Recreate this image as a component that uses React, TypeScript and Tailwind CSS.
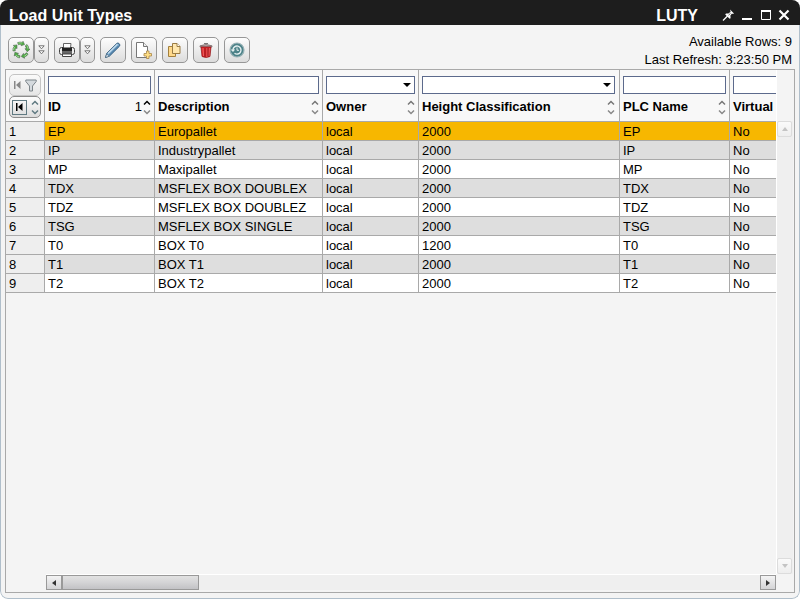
import React, { useState } from "react";

type Filter = "text" | "select";

interface Column {
  title: string;
  filter: Filter;
  width: string;
  sort?: number;
}

const columns: Column[] = [
  { title: "ID", filter: "text", width: "w-[110px]", sort: 1 },
  { title: "Description", filter: "text", width: "w-[168px]" },
  { title: "Owner", filter: "select", width: "w-[96px]" },
  { title: "Height Classification", filter: "select", width: "w-[201px]" },
  { title: "PLC Name", filter: "text", width: "w-[110px]" },
  { title: "Virtual", filter: "text", width: "w-[110px]" },
];

const rows: string[][] = [
  ["EP", "Europallet", "local", "2000", "EP", "No"],
  ["IP", "Industrypallet", "local", "2000", "IP", "No"],
  ["MP", "Maxipallet", "local", "2000", "MP", "No"],
  ["TDX", "MSFLEX BOX DOUBLEX", "local", "2000", "TDX", "No"],
  ["TDZ", "MSFLEX BOX DOUBLEZ", "local", "2000", "TDZ", "No"],
  ["TSG", "MSFLEX BOX SINGLE", "local", "2000", "TSG", "No"],
  ["T0", "BOX T0", "local", "1200", "T0", "No"],
  ["T1", "BOX T1", "local", "2000", "T1", "No"],
  ["T2", "BOX T2", "local", "2000", "T2", "No"],
];

const RecycleIcon = () => (
  <svg width="20" height="20" viewBox="0 0 20 20" aria-hidden="true" className="shrink-0">
    {[0, 72, 144, 216, 288].map((a) => (
      <g key={a} transform={`rotate(${a} 10 10)`}>
        <path d="M6.6 2.6Q9 1.4 11.4 2.4L12 1.2L13.6 4.6L10 5.8L10.5 4.6Q8.6 4 7.4 4.8Z" fill="#4fae45" stroke="#4b5f4c" strokeWidth=".5" />
        <path d="M7.4 3.2Q9 2.4 10.8 3" stroke="#b9e6ae" strokeWidth=".7" fill="none" />
      </g>
    ))}
  </svg>
);

const PrinterIcon = () => (
  <svg width="18" height="16" viewBox="0 0 18 16" aria-hidden="true" className="shrink-0">
    <rect x="1.5" y="5.5" width="15" height="7" rx="2" fill="#eee" stroke="#444" />
    <path d="M5.5 6V1.5h7.5L12.5 6" fill="#fff" stroke="#666" />
    <path d="M4 5.5h10V10H4z" fill="#222" />
    <path d="M4 9h10v3H4z" fill="#666" />
    <path d="M4.5 12h9v2.5h-9z" fill="#fff" stroke="#444" />
  </svg>
);

const PencilIcon = () => (
  <svg width="18" height="18" viewBox="0 0 18 18" aria-hidden="true" className="shrink-0">
    <path d="M1.5 16.5l1.3-4.3L12.8 2.4q1.1-1 2.4.3t.3 2.5L5.6 15z" fill="#6f9fc4" stroke="#3d6585" />
    <path d="M4 12.5L13.5 3.2" stroke="#c3dced" strokeWidth="1.4" />
    <path d="M5.5 14L14.5 5" stroke="#41729b" strokeWidth="1" />
    <path d="M1.5 16.5l1.2-3.6 2.3 2.4z" fill="#e8eef2" stroke="#3d5e78" strokeWidth=".6" />
  </svg>
);

const NewIcon = () => (
  <svg width="18" height="18" viewBox="0 0 18 18" aria-hidden="true" className="shrink-0">
    <path d="M1.5 1.5h7l4 4v11h-11z" fill="#fff" stroke="#777" />
    <path d="M8.5 1.5v4h4" fill="#eee" stroke="#777" />
    <path d="M11.5 10h2.5v2.5h2.5V15H14v2.5h-2.5V15H9v-2.5h2.5z" fill="#ffdf85" stroke="#a9874a" strokeWidth=".8" />
  </svg>
);

const CopyIcon = () => (
  <svg width="16" height="16" viewBox="0 0 16 16" aria-hidden="true" className="shrink-0">
    <path d="M1.5 4.5h7v10h-7z" fill="#ffd98a" stroke="#a3803d" />
    <path d="M5.5 1.5H10l3 3v7H5.5z" fill="#ffe7ae" stroke="#997b44" />
    <path d="M10 1.5v3h3" fill="#fff" stroke="#997b44" />
  </svg>
);

const TrashIcon = () => (
  <svg width="14" height="17" viewBox="0 0 14 17" aria-hidden="true" className="shrink-0">
    <path d="M5 1.5h4" stroke="#777" />
    <path d="M1 3.8q6-2.6 12 0V5H1z" fill="#b5a5a5" stroke="#6f5c5c" strokeWidth=".7" />
    <path d="M2 5h10l-1 9.5q-4 2-8 0z" fill="#dc2428" stroke="#8e1519" strokeWidth=".7" />
    <path d="M4 6l.5 8M8 6v9M10.3 6l-.5 8" stroke="#f58380" strokeWidth=".7" />
    <path d="M6 6v9M9 6v8.5" stroke="#87161a" strokeWidth=".8" />
  </svg>
);

const HistoryIcon = () => (
  <svg width="18" height="18" viewBox="0 0 18 18" aria-hidden="true" className="shrink-0">
    <circle cx="9" cy="9" r="7" fill="#4c8288" stroke="#9ab3b7" strokeWidth="1.2" />
    <path d="M5 9a4 4 0 1 1 1.5 3.2" fill="none" stroke="#e4eff0" strokeWidth="1.4" />
    <path d="M2.6 8.5h4.6L5 11z" fill="#e4eff0" />
    <path d="M9 6.5V9.3h2" fill="none" stroke="#e4eff0" />
  </svg>
);

const DoubleDown = () => (
  <svg width="7" height="10" viewBox="0 0 7 10" fill="#fff" stroke="#666" strokeWidth=".9" aria-hidden="true" className="shrink-0">
    <path d="M.8.8h5.4L3.5 3.8zM.8 5.8h5.4L3.5 8.8z" />
  </svg>
);

const SortArrows = ({ up = "#777", down = "#888" }: { up?: string; down?: string }) => (
  <svg width="8" height="15" viewBox="0 0 8 15" fill="none" strokeWidth="1.5" aria-hidden="true" className="shrink-0">
    <path d="M1 4.5l3-3 3 3" stroke={up} />
    <path d="M1 10.5l3 3 3-3" stroke={down} />
  </svg>
);

const FirstIcon = ({ color }: { color: string }) => (
  <svg width="7" height="8" viewBox="0 0 7 8" fill={color} aria-hidden="true" className="shrink-0">
    <path d="M0 0h1.5v8H0zM6.5 0v8L2 4z" />
  </svg>
);

const face = "flex items-center justify-center border border-[#979797] bg-linear-to-b from-[#fdfdfd] to-[#dcdcdc]";

const ToolButton = ({ label, children }: { label: string; children: React.ReactNode }) => (
  <button type="button" aria-label={label} className={`${face} h-[26px] w-[26px] rounded-[5px]`}>
    {children}
  </button>
);

const SplitButton = ({ label, children }: { label: string; children: React.ReactNode }) => (
  <div className="flex">
    <ToolButton label={label}>{children}</ToolButton>
    <button type="button" aria-label={`${label} options`} className={`${face} h-[26px] w-[15px] rounded-[5px]`}>
      <DoubleDown />
    </button>
  </div>
);

const HeaderCell = ({ column }: { column: Column }) => {
  const box = "block h-[18px] w-full rounded-none border border-[#5c6a8c] bg-white px-1 text-[13px] outline-none";
  const wide = column.title === "Height Classification";
  return (
    <th scope="col" className="border-r border-b border-[#a9a9a9] p-0 text-left align-top font-bold">
      <div className={`flex h-[51px] flex-col gap-[3px] pt-[6px] pl-[3px] ${wide ? "pr-1" : "pr-[3px]"}`}>
        {column.filter === "text" ? (
          <input type="text" aria-label={`Filter ${column.title}`} className={box} />
        ) : (
          <div className="relative">
            <select aria-label={`Filter ${column.title}`} className={`${box} appearance-none`}>
              <option value=""></option>
            </select>
            <svg width="8" height="4" viewBox="0 0 8 4" aria-hidden="true" className="pointer-events-none absolute top-[7px] right-1">
              <path d="M0 0h8L4 4z" fill="#000" />
            </svg>
          </div>
        )}
        <div className="flex items-center justify-between leading-5">
          <span className="whitespace-nowrap">{column.title}</span>
          {column.title !== "Virtual" && (
            <span className="flex items-center gap-px font-normal">
              {column.sort}
              <SortArrows up={column.sort ? "#000" : "#777"} />
            </span>
          )}
        </div>
      </div>
    </th>
  );
};

const scrollFace = "flex shrink-0 items-center justify-center border bg-linear-to-b";

export default function App() {
  const [selected, setSelected] = useState(0);

  return (
    <main className="flex min-h-screen flex-col overflow-hidden rounded-[8px] bg-[#f4f4f4] font-['Liberation_Sans',Arial,sans-serif] text-[13px] text-black">
      <header className="flex h-[25px] items-center justify-between bg-[#1d1d1d] pr-[10px] pl-[9px] text-white">
        <h1 className="pt-[7px] text-[16px] leading-5 font-bold">Load Unit Types</h1>
        <div className="flex items-center">
          <span className="mr-[24px] pt-[7px] text-[16px] leading-5 font-bold">LUTY</span>
          <div className="flex items-center gap-[6px] pt-1">
            <button type="button" aria-label="Pin">
              <svg width="13" height="12" viewBox="0 0 13 12" aria-hidden="true">
                <path d="M8 .5l4 4-1.2.5L10 4.4 8.4 6.6l.2 2.6-1 .6L3.2 5.4l.8-.9 2.4.1L8.6 2.8z" fill="#fff" />
                <path d="M5.5 7L1 11.5" stroke="#fff" strokeWidth="1.2" />
                <path d="M8.6 4.2L6.5 6.2" stroke="#1d1d1d" strokeWidth=".7" />
              </svg>
            </button>
            <button type="button" aria-label="Minimize" className="w-[13px]">
              <svg width="12" height="12" viewBox="0 0 12 12" aria-hidden="true">
                <path d="M1 9h10v2H1z" fill="#fff" />
              </svg>
            </button>
            <button type="button" aria-label="Maximize">
              <svg width="12" height="12" viewBox="0 0 12 12" aria-hidden="true">
                <path d="M1.5 2.5h9v8h-9z" fill="none" stroke="#fff" />
                <path d="M1 1h10v2H1z" fill="#fff" />
              </svg>
            </button>
            <button type="button" aria-label="Close">
              <svg width="12" height="12" viewBox="0 0 12 12" aria-hidden="true">
                <path d="M1.5 1.5l9 9M10.5 1.5l-9 9" stroke="#fff" strokeWidth="2.2" />
              </svg>
            </button>
          </div>
        </div>
      </header>

      <div className="flex flex-1 flex-col rounded-b-[8px] border border-t-0 border-[#b0bfcb] px-1 pb-[5px]">
        <div className="flex h-11 items-start justify-between pt-2 pr-[3px] pl-[3px]">
          <div className="flex gap-[5px] pt-1" role="toolbar" aria-label="Actions">
            <SplitButton label="Refresh"><RecycleIcon /></SplitButton>
            <SplitButton label="Print"><PrinterIcon /></SplitButton>
            <ToolButton label="Edit"><PencilIcon /></ToolButton>
            <ToolButton label="New"><NewIcon /></ToolButton>
            <ToolButton label="Copy"><CopyIcon /></ToolButton>
            <ToolButton label="Delete"><TrashIcon /></ToolButton>
            <ToolButton label="History"><HistoryIcon /></ToolButton>
          </div>
          <div className="text-right leading-[18px]">
            <p>Available Rows: 9</p>
            <p>Last Refresh: 3:23:50 PM</p>
          </div>
        </div>

        <section className="flex flex-1 flex-col border border-[#a9a9a9]">
          <div className="flex flex-1">
            <div className="min-w-0 flex-1 overflow-hidden">
              <table className="w-[834px] table-fixed border-separate border-spacing-0">
                <colgroup>
                  <col className="w-[39px]" />
                  {columns.map((c) => (
                    <col key={c.title} className={c.width} />
                  ))}
                </colgroup>
                <thead className="bg-[#f8f8f8]">
                  <tr>
                    <th className="border-r border-b border-[#a9a9a9] p-0 align-top">
                      <div className="flex flex-col pt-1 pl-[3px]">
                        <button type="button" aria-label="Clear filter" className="flex h-[22px] w-8 items-center justify-center gap-1 rounded-[5px] border border-[#c4c4c4] bg-linear-to-b from-[#fafafa] to-[#e6e6e6]">
                          <FirstIcon color="#888" />
                          <svg width="12" height="13" viewBox="0 0 12 13" aria-hidden="true">
                            <path d="M.8 1h10.4v1.5L7.5 7v5h-3V7L.8 2.5z" fill="#d5dade" stroke="#7d858a" />
                          </svg>
                        </button>
                        <button type="button" aria-label="Clear sorting" className="flex h-[22px] w-8 items-center justify-between rounded-[5px] border border-[#8c8c8c] bg-linear-to-b from-[#fdfdfd] to-[#dcdcdc] pr-px pl-0.5">
                          <span className="flex h-[15px] w-[15px] items-center justify-center border border-[#607a82]">
                            <FirstIcon color="#000" />
                          </span>
                          <SortArrows up="#607a82" down="#607a82" />
                        </button>
                      </div>
                    </th>
                    {columns.map((c) => (
                      <HeaderCell key={c.title} column={c} />
                    ))}
                  </tr>
                </thead>
                <tbody>
                  {rows.map((row, i) => (
                    <tr
                      key={row[0]}
                      onClick={() => setSelected(i)}
                      className={i === selected ? "bg-[#f7b700]" : i % 2 ? "bg-[#dedede]" : "bg-white"}
                    >
                      <th scope="row" className="border-r border-b border-[#a9a9a9] bg-[#eeeeee] pt-0.5 pr-0 pb-0 pl-[3px] text-left leading-4 font-normal">
                        {i + 1}
                      </th>
                      {row.map((cell, j) => (
                        <td key={j} className="border-r border-b border-[#a9a9a9] pt-0.5 pr-0 pb-0 pl-[3px] leading-4 whitespace-nowrap">
                          {cell}
                        </td>
                      ))}
                    </tr>
                  ))}
                </tbody>
              </table>
            </div>
            <div className="flex w-[18px] flex-col border-l border-white pt-[51px] pr-px">
              <div className="flex flex-1 flex-col justify-between bg-[#efefef]">
                <button type="button" aria-label="Scroll up" className={`${scrollFace} h-4 w-[15px] rounded-xs border-[#dcdcdc] from-[#fafafa] to-[#eeeeee]`}>
                  <svg width="6" height="4" viewBox="0 0 6 4" aria-hidden="true"><path d="M0 4h6L3 0z" fill="#c4c4c4" /></svg>
                </button>
                <button type="button" aria-label="Scroll down" className={`${scrollFace} h-4 w-[15px] rounded-xs border-[#dcdcdc] from-[#fafafa] to-[#eeeeee]`}>
                  <svg width="6" height="4" viewBox="0 0 6 4" aria-hidden="true"><path d="M0 0h6L3 4z" fill="#c4c4c4" /></svg>
                </button>
              </div>
            </div>
          </div>
          <div className="mr-[18px] ml-10 border-t border-white pb-0.5">
            <div className="flex bg-[#efefef]">
              <button type="button" aria-label="Scroll left" className={`${scrollFace} h-[15px] w-4 border-[#999999] from-[#f4f4f4] to-[#d4d4d6]`}>
                <svg width="4" height="6" viewBox="0 0 4 6" aria-hidden="true"><path d="M4 0v6L0 3z" fill="#333" /></svg>
              </button>
              <div className="flex flex-1">
                <div className="h-[15px] w-[137px] border border-[#999999] bg-linear-to-b from-[#e2e2e2] via-[#d4d4d6] to-[#c2c2c5]" />
              </div>
              <button type="button" aria-label="Scroll right" className={`${scrollFace} h-[15px] w-4 border-[#999999] from-[#f4f4f4] to-[#d4d4d6]`}>
                <svg width="4" height="6" viewBox="0 0 4 6" aria-hidden="true"><path d="M0 0v6l4-3z" fill="#333" /></svg>
              </button>
            </div>
          </div>
        </section>
      </div>
    </main>
  );
}
